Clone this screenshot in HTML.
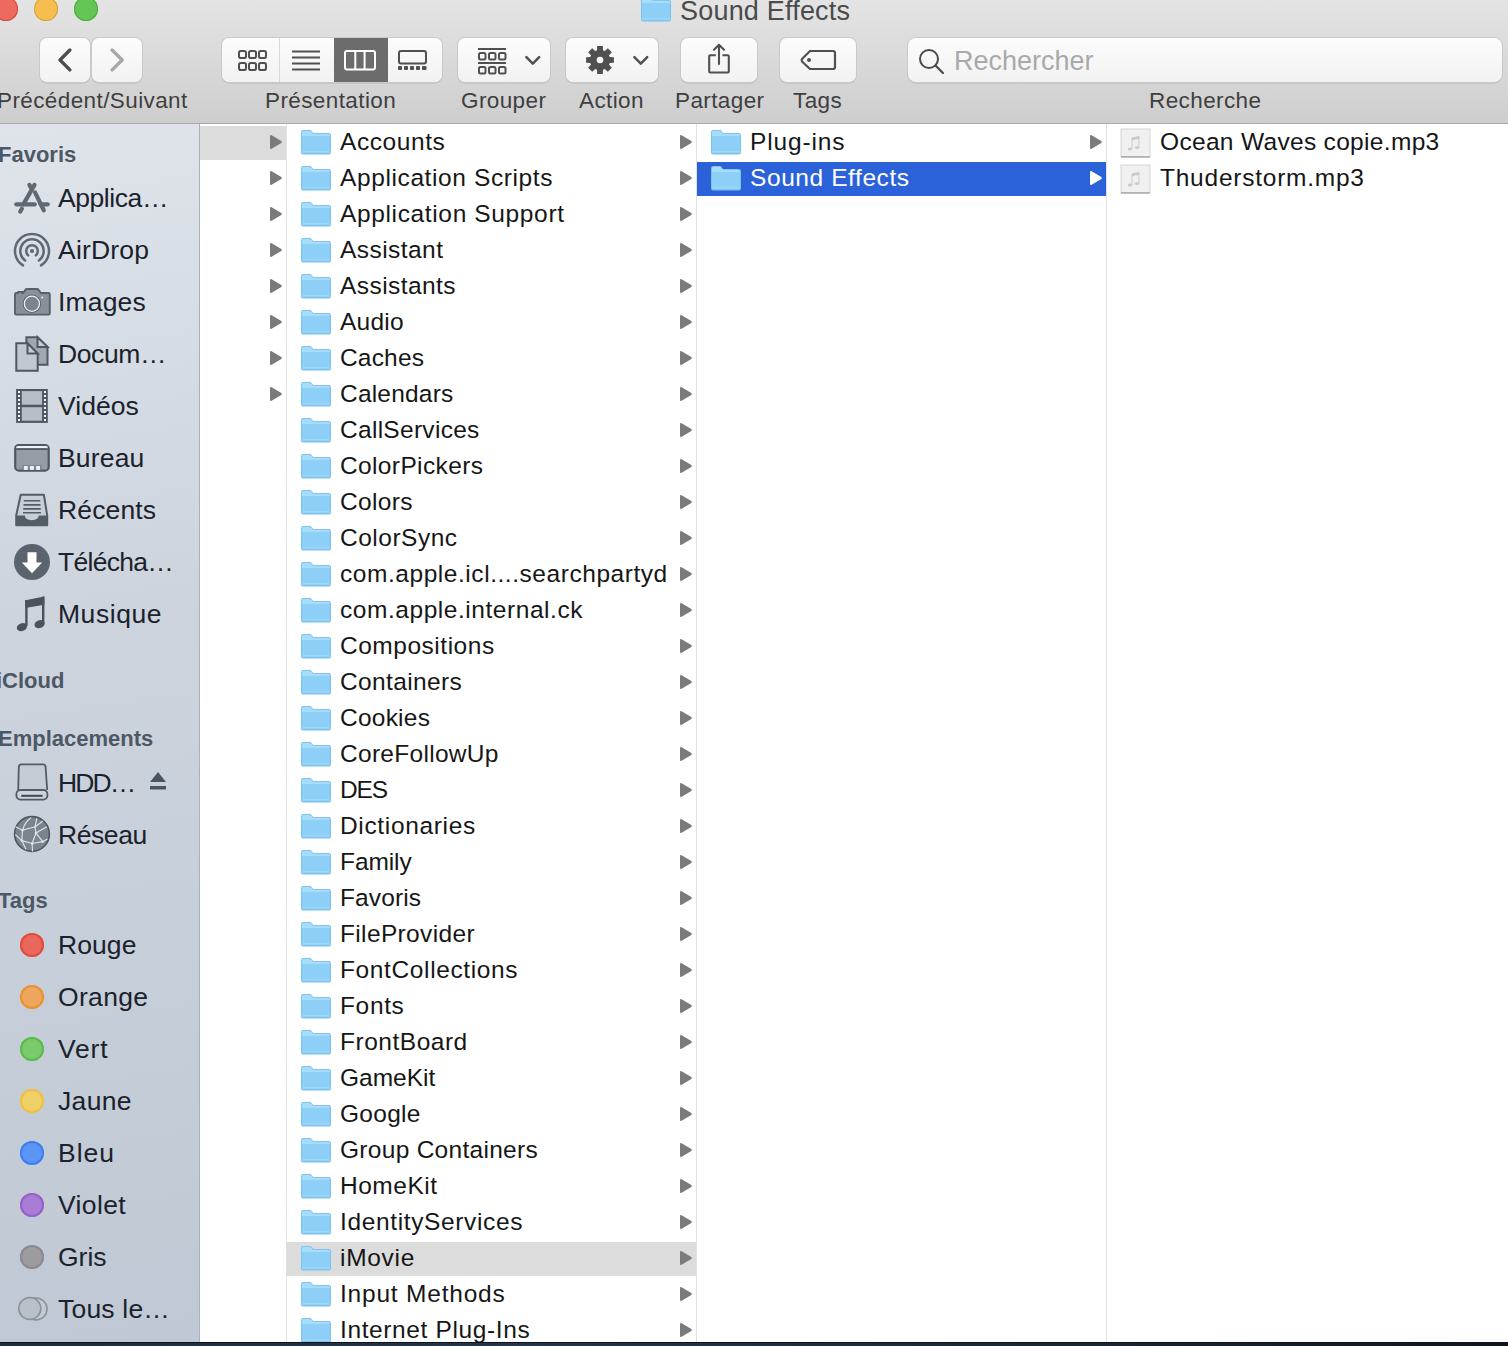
<!DOCTYPE html>
<html><head><meta charset="utf-8"><style>
*{margin:0;padding:0;box-sizing:border-box}
html,body{width:1508px;height:1346px;overflow:hidden;background:#fff;font-family:"Liberation Sans",sans-serif}
.t{position:absolute;font-size:24.5px;line-height:34px;white-space:nowrap}
.fd{display:block}
.ar{display:block}
.tb{position:absolute;top:38px;height:44px;border-radius:7px;background:linear-gradient(#fcfcfc,#f2f2f2);box-shadow:0 0 0 1px #c9c9c9, 0 1px 0 0.5px #b5b5b5}
.lbl{position:absolute;top:87px;font-size:22.5px;line-height:28px;color:#3f3f3f;white-space:nowrap;letter-spacing:0.4px}
.sb{position:absolute;left:58px;font-size:26.5px;line-height:34px;color:#1b222c;white-space:nowrap;letter-spacing:0.2px}
.sh{position:absolute;left:-1px;font-size:22px;line-height:28px;font-weight:bold;color:#4d5865;white-space:nowrap;letter-spacing:0}
.ic{position:absolute;left:10px;width:44px;height:44px}
</style></head><body>


<div style="position:absolute;left:0;top:0;width:1508px;height:124px;background:linear-gradient(#e4e4e4,#cecece);border-bottom:1px solid #a9a9a9"></div>
<div style="position:absolute;left:-6px;top:-3px;width:24px;height:24px;border-radius:50%;background:#ed6a5e;box-shadow:inset 0 0 0 1px #d5493c"></div>
<div style="position:absolute;left:34px;top:-3px;width:24px;height:24px;border-radius:50%;background:#f5be4f;box-shadow:inset 0 0 0 1px #d9a13a"></div>
<div style="position:absolute;left:74px;top:-3px;width:24px;height:24px;border-radius:50%;background:#62c554;box-shadow:inset 0 0 0 1px #4ea73f"></div>
<div style="position:absolute;left:641px;top:-3px;width:30px;height:25px"><svg width="30" height="25" viewBox="0 0 30 25"><path d="M0 2.2 Q0 0 2.2 0 H9.6 L12.2 3 H27.8 Q30 3 30 5.2 V22.2 Q30 24.4 27.8 24.4 H2.2 Q0 24.4 0 22.2 Z" fill="#76bdea"/><path d="M0.8 2.4 Q0.8 0.8 2.4 0.8 H9.3 L11.9 3.8 H27.6 Q29.2 3.8 29.2 5.4 V6 H0.8 Z" fill="#a7dcfa"/><rect x="0.8" y="6" width="28.4" height="17.4" fill="#8dcff6"/><rect x="0.8" y="21.2" width="28.4" height="1.2" fill="#a0d8f8"/></svg></div>
<div style="position:absolute;left:680px;top:-5px;font-size:27px;line-height:32px;color:#4b4b4b;white-space:nowrap;letter-spacing:0.2px">Sound Effects</div>
<div class="tb" style="left:40px;width:50px"></div><div class="tb" style="left:92px;width:50px"></div>
<svg style="position:absolute;left:40px;top:38px" width="102" height="44"><path d="M29.9 12 L20 22 L29.9 31.9" fill="none" stroke="#4d4d4d" stroke-width="3.4" stroke-linecap="round" stroke-linejoin="round"/><path d="M72.1 12 L82.2 22 L72.1 31.9" fill="none" stroke="#a8a8a8" stroke-width="3.4" stroke-linecap="round" stroke-linejoin="round"/></svg>
<div class="lbl" style="left:-3px">Précédent/Suivant</div>
<div class="tb" style="left:222px;width:220px;overflow:hidden"><div style="position:absolute;left:112px;top:0;width:54px;height:44px;background:#6c6c6c"></div><div style="position:absolute;left:57px;top:0;width:1px;height:44px;background:#d9d9d9"></div></div>
<svg style="position:absolute;left:222px;top:38px" width="220" height="44">
<g fill="none" stroke="#505050" stroke-width="2">
<rect x="17" y="13" width="7" height="7" rx="1.8"/><rect x="27" y="13" width="7" height="7" rx="1.8"/><rect x="37" y="13" width="7" height="7" rx="1.8"/>
<rect x="17" y="25" width="7" height="7" rx="1.8"/><rect x="27" y="25" width="7" height="7" rx="1.8"/><rect x="37" y="25" width="7" height="7" rx="1.8"/>
<path d="M70 13.5H98M70 19.5H98M70 25.5H98M70 31.5H98"/>
<rect x="177" y="13" width="27" height="12.5" rx="2"/>
</g>
<g fill="#505050"><rect x="176" y="28" width="4" height="4" rx="0.8"/><rect x="182" y="28" width="4" height="4" rx="0.8"/><rect x="188" y="28" width="4" height="4" rx="0.8"/><rect x="194" y="28" width="4" height="4" rx="0.8"/><rect x="200" y="28" width="4.5" height="4" rx="0.8"/></g>
<g fill="none" stroke="#fff" stroke-width="2"><rect x="123" y="13" width="30" height="18.5" rx="2"/><path d="M133.3 13V31.5M142.6 13V31.5"/></g>
</svg>
<div class="lbl" style="left:265px">Présentation</div>
<div class="tb" style="left:458px;width:92px"></div>
<svg style="position:absolute;left:458px;top:38px" width="92" height="44">
<g fill="none" stroke="#505050" stroke-width="2"><path d="M20 11H48M20 25H48"/>
<rect x="21" y="15" width="6.5" height="6.5" rx="1.5"/><rect x="31" y="15" width="6.5" height="6.5" rx="1.5"/><rect x="41" y="15" width="6.5" height="6.5" rx="1.5"/>
<rect x="21" y="29" width="6.5" height="6.5" rx="1.5"/><rect x="31" y="29" width="6.5" height="6.5" rx="1.5"/><rect x="41" y="29" width="6.5" height="6.5" rx="1.5"/>
<path d="M68.4 19.2L74.8 25.6L81.2 19.2" stroke-width="2.5" stroke-linecap="round" stroke-linejoin="round"/></g></svg>
<div class="lbl" style="left:461px">Grouper</div>
<div class="tb" style="left:566px;width:92px"></div>
<svg style="position:absolute;left:566px;top:38px" width="92" height="44">
<path d="M43.74 18.99 L47.92 19.18 L47.92 24.82 L43.74 25.01 L43.02 26.76 L45.84 29.85 L41.85 33.84 L38.76 31.02 L37.01 31.74 L36.82 35.92 L31.18 35.92 L30.99 31.74 L29.24 31.02 L26.15 33.84 L22.16 29.85 L24.98 26.76 L24.26 25.01 L20.08 24.82 L20.08 19.18 L24.26 18.99 L24.98 17.24 L22.16 14.15 L26.15 10.16 L29.24 12.98 L30.99 12.26 L31.18 8.08 L36.82 8.08 L37.01 12.26 L38.76 12.98 L41.85 10.16 L45.84 14.15 L43.02 17.24Z M37.3 22 A3.3 3.3 0 1 0 30.7 22 A3.3 3.3 0 1 0 37.3 22Z" fill="#505050" fill-rule="evenodd"/>
<path d="M68.4 19.2L74.8 25.6L81.2 19.2" fill="none" stroke="#505050" stroke-width="2.5" stroke-linecap="round" stroke-linejoin="round"/></svg>
<div class="lbl" style="left:579px">Action</div>
<div class="tb" style="left:681px;width:76px"></div>
<svg style="position:absolute;left:681px;top:38px" width="76" height="44">
<g fill="none" stroke="#505050" stroke-width="2.1" stroke-linejoin="round"><path d="M34.8 17.2H29.2Q28.2 17.2 28.2 18.2V33.5Q28.2 34.5 29.2 34.5H46.8Q47.8 34.5 47.8 33.5V18.2Q47.8 17.2 46.8 17.2H41.4"/><path d="M38 26V7.2M33 11.8L38 6.8L43 11.8" stroke-linecap="round"/></g></svg>
<div class="lbl" style="left:675px">Partager</div>
<div class="tb" style="left:780px;width:76px"></div>
<svg style="position:absolute;left:780px;top:38px" width="76" height="44">
<path d="M30 13H53Q55 13 55 15V29Q55 31 53 31H30L22 23.5Q21.3 22 22 21Z" fill="none" stroke="#505050" stroke-width="2.2" stroke-linejoin="round"/><circle cx="29" cy="22" r="2" fill="#505050"/></svg>
<div class="lbl" style="left:793px">Tags</div>
<div class="tb" style="left:908px;width:594px;border-radius:8px"></div>
<svg style="position:absolute;left:908px;top:38px" width="60" height="44"><circle cx="21" cy="21" r="9" fill="none" stroke="#4a4a4a" stroke-width="2"/><path d="M27.5 27.5L35 35" stroke="#4a4a4a" stroke-width="2.2" stroke-linecap="round"/></svg>
<div style="position:absolute;left:954px;top:45px;font-size:27px;line-height:32px;color:#a9a9a9;white-space:nowrap">Rechercher</div>
<div class="lbl" style="left:1149px">Recherche</div>
<div style="position:absolute;left:0;top:124px;width:200px;height:1222px;background:linear-gradient(172deg,#dfe4ea 0%,#cdd4de 40%,#bfc8d4 100%);border-right:1px solid #a9b1bc"></div>
<div class="sh" style="top:141px;left:-2px">Favoris</div>
<svg class="ic" style="top:176px" width="44" height="44" viewBox="0 0 44 44"><g stroke="#606872" stroke-width="4.2" stroke-linecap="round" fill="none"><path d="M24.5 8.9L13.4 28.3"/><path d="M11.9 32.7L10.2 35.6"/><path d="M19.4 8.9L21.6 12.7"/><path d="M25 16.4L33.8 34.3"/><path d="M6.3 28.3H24.8"/><path d="M30.6 28.3H37.7"/></g></svg>
<div class="sb" style="top:181px;letter-spacing:-0.43px">Applica…</div>
<svg class="ic" style="top:228px" width="44" height="44" viewBox="0 0 44 44"><g stroke="#606872" stroke-width="2.5" fill="none" stroke-linecap="round"><path d="M18.12 27.31A5.8 5.8 0 1 1 25.88 27.31"/><path d="M15.12 32.47A11.7 11.7 0 1 1 28.88 32.47"/><path d="M12.99 37.42A17 17 0 1 1 31.01 37.42"/></g><circle cx="22" cy="23" r="2.1" fill="#606872"/></svg>
<div class="sb" style="top:233px;letter-spacing:0.2px">AirDrop</div>
<svg class="ic" style="top:280px" width="44" height="44" viewBox="0 0 44 44"><path d="M5 14.2Q5 13 6.2 13H8V11.9H12.3V13H13.2L15.4 9.9Q15.9 9 17 9H27Q28 9 28.6 9.9L30.8 13H38.6Q39.8 13 39.8 14.2V33.4Q39.8 34.6 38.6 34.6H6.2Q5 34.6 5 33.4Z" fill="#8a9099" stroke="#575f69" stroke-width="1.9" stroke-linejoin="round"/><circle cx="21.9" cy="23.8" r="9.2" fill="#5d656f"/><circle cx="21.9" cy="23.8" r="7.6" fill="#7d848d" stroke="#eef0f3" stroke-width="1.2"/><circle cx="32.3" cy="17.5" r="0.9" fill="#eef0f3"/></svg>
<div class="sb" style="top:285px;letter-spacing:0.16px">Images</div>
<svg class="ic" style="top:332px" width="44" height="44" viewBox="0 0 44 44"><path d="M16.4 5.2H27.5L37.5 14.9V32.8H16.4Z" fill="#a0a7b0" stroke="#4f5761" stroke-width="2" stroke-linejoin="miter"/><path d="M27.5 5.2V14.9H37.5Z" fill="#c5cbd2" stroke="#4f5761" stroke-width="2"/><path d="M6.3 11.2H17.5L27.7 21.6V38.7H6.3Z" fill="#c2c8d0" stroke="#4f5761" stroke-width="2"/><path d="M17.5 11.2V21.6H27.7Z" fill="#c9ced5" stroke="#4f5761" stroke-width="2"/></svg>
<div class="sb" style="top:337px;letter-spacing:-0.4px">Docum…</div>
<svg class="ic" style="top:384px" width="44" height="44" viewBox="0 0 44 44"><rect x="6.1" y="5" width="31.7" height="33.9" fill="#4f5761"/><rect x="11.8" y="7.1" width="20.3" height="13.6" fill="#b7bec7"/><rect x="11.8" y="23.2" width="20.3" height="13.5" fill="#b7bec7"/><g fill="#f2f4f6"><rect x="8" y="7" width="2" height="2"/><rect x="8" y="11" width="2" height="2"/><rect x="8" y="15" width="2" height="2"/><rect x="8" y="19" width="2" height="2"/><rect x="8" y="23" width="2" height="2"/><rect x="8" y="27" width="2" height="2"/><rect x="8" y="31" width="2" height="2"/><rect x="8" y="35" width="2" height="2"/><rect x="34" y="7" width="2" height="2"/><rect x="34" y="11" width="2" height="2"/><rect x="34" y="15" width="2" height="2"/><rect x="34" y="19" width="2" height="2"/><rect x="34" y="23" width="2" height="2"/><rect x="34" y="27" width="2" height="2"/><rect x="34" y="31" width="2" height="2"/><rect x="34" y="35" width="2" height="2"/></g></svg>
<div class="sb" style="top:389px;letter-spacing:0.04px">Vidéos</div>
<svg class="ic" style="top:436px" width="44" height="44" viewBox="0 0 44 44"><rect x="5.2" y="9" width="33.5" height="25.7" rx="3.8" fill="#959ca5" stroke="#4f5761" stroke-width="2.2"/><path d="M6.3 10.5Q7 10.1 9 10.1H35Q37 10.1 37.6 10.5V12.2H6.3Z" fill="#eef0f3"/><rect x="6.3" y="12.2" width="31.3" height="1.8" fill="#4f5761"/><rect x="12.1" y="28.9" width="19.6" height="5" fill="#80878f"/><g fill="#eef0f3"><rect x="13.9" y="30" width="3.9" height="3.9"/><rect x="20" y="30" width="3.9" height="3.9"/><rect x="26.1" y="30" width="3.9" height="3.9"/></g></svg>
<div class="sb" style="top:441px;letter-spacing:0.18px">Bureau</div>
<svg class="ic" style="top:488px" width="44" height="44" viewBox="0 0 44 44"><path d="M10.7 6.8H33.9L37.2 27.5V37.2H6.2V27.5Z" fill="#c8ced5" stroke="#545c67" stroke-width="2" stroke-linejoin="round"/><g stroke="#545c67" stroke-width="1.6"><path d="M13.8 12.8H30.2M13.5 16.9H30.5M13.3 20.9H30.7M13 24.8H31"/></g><path d="M6.2 27.6H14.7Q15.5 32.2 21.8 32.2Q28 32.2 28.8 27.6H37.2V36.2Q37.2 37.2 36.2 37.2H7.2Q6.2 37.2 6.2 36.2Z" fill="#545c67"/></svg>
<div class="sb" style="top:493px;letter-spacing:0.15px">Récents</div>
<svg class="ic" style="top:540px" width="44" height="44" viewBox="0 0 44 44"><circle cx="22" cy="22" r="18" fill="#5b636e"/><path d="M17.5 12.3H26.5V22.5H32.2L22 33.2L11.8 22.5H17.5Z" fill="#fff"/></svg>
<div class="sb" style="top:545px;letter-spacing:-0.71px">Télécha…</div>
<svg class="ic" style="top:592px" width="44" height="44" viewBox="0 0 44 44"><path d="M15.2 8.2L34.4 4.4V12.8L15.2 16Z" fill="#4a525d"/><rect x="15.2" y="8" width="2.4" height="26" fill="#4a525d"/><rect x="32" y="4.6" width="2.4" height="27" fill="#4a525d"/><ellipse cx="11.9" cy="35.2" rx="5.2" ry="3.9" transform="rotate(-20 11.9 35.2)" fill="#4a525d"/><ellipse cx="29.6" cy="32.2" rx="5.2" ry="3.9" transform="rotate(-20 29.6 32.2)" fill="#4a525d"/></svg>
<div class="sb" style="top:597px;letter-spacing:0.55px">Musique</div>
<div class="sh" style="top:667px;left:-4px">iCloud</div>
<div class="sh" style="top:725px;left:-2px">Emplacements</div>
<svg class="ic" style="top:761px" width="44" height="44" viewBox="0 0 44 44"><path d="M8.2 29L8.8 6Q8.9 3.3 11.4 3.3H33Q35.5 3.3 35.6 6L37.2 29" fill="#c5ccd5" stroke="#535b66" stroke-width="1.8" stroke-linejoin="round"/><rect x="6.4" y="29" width="31" height="9.6" rx="4" fill="#cdd3db" stroke="#535b66" stroke-width="1.8"/><path d="M11.2 34.8H32.6" stroke="#3f4650" stroke-width="2"/></svg>
<div class="sb" style="top:766px;letter-spacing:-1.87px">HDD…</div>
<svg class="ic" style="top:813px" width="44" height="44" viewBox="0 0 44 44"><circle cx="22" cy="21" r="17.4" fill="#7b838e" stroke="#4f5761" stroke-width="1.6"/><g stroke="#dde2e8" stroke-width="1.2" fill="none" stroke-linecap="round"><path d="M12.5 17.3Q15 9 20.7 5.1M12.5 17.3L6 14M12.5 17.3Q18 15.5 25 14M25 14L26.7 5.8M25 14L32.5 8.3M26 20.1L36.4 14M26 20.1L25 14M26 20.1L22.1 30.5M26 20.1L32.8 28.7M12.5 17.3L11.8 27.6M11.8 27.6L5.7 21.9M11.8 27.6L22.1 30.5M11.8 27.6L15.7 35.8M22.1 30.5L22.5 38M22.1 30.5L32.8 28.7M32.8 28.7L37 26.2"/></g><g fill="#dde2e8"><circle cx="12.5" cy="17.3" r="1.3"/><circle cx="25" cy="14" r="1.1"/><circle cx="26" cy="20.1" r="1.3"/><circle cx="11.8" cy="27.6" r="1.3"/><circle cx="22.1" cy="30.5" r="1.3"/><circle cx="32.8" cy="28.7" r="1.3"/></g></svg>
<div class="sb" style="top:818px;letter-spacing:-0.42px">Réseau</div>
<div class="sh" style="top:887px;left:-2px">Tags</div>
<svg style="position:absolute;left:148px;top:770px" width="20" height="22"><path d="M10 2L18 12H2Z" fill="#4b5562"/><rect x="2" y="16" width="16" height="3.5" fill="#4b5562"/></svg>
<div style="position:absolute;left:20px;top:933px;width:24px;height:24px;border-radius:50%;background:#e8695c;box-shadow:inset 0 0 0 2px #e34b3d"></div>
<div class="sb" style="top:928px;letter-spacing:0.07px">Rouge</div>
<div style="position:absolute;left:20px;top:985px;width:24px;height:24px;border-radius:50%;background:#eca65d;box-shadow:inset 0 0 0 2px #ea922f"></div>
<div class="sb" style="top:980px;letter-spacing:0.34px">Orange</div>
<div style="position:absolute;left:20px;top:1037px;width:24px;height:24px;border-radius:50%;background:#7bcb6c;box-shadow:inset 0 0 0 2px #58bb4a"></div>
<div class="sb" style="top:1032px;letter-spacing:0.83px">Vert</div>
<div style="position:absolute;left:20px;top:1089px;width:24px;height:24px;border-radius:50%;background:#f2d069;box-shadow:inset 0 0 0 2px #efc03e"></div>
<div class="sb" style="top:1084px;letter-spacing:0.35px">Jaune</div>
<div style="position:absolute;left:20px;top:1141px;width:24px;height:24px;border-radius:50%;background:#5b95f5;box-shadow:inset 0 0 0 2px #3e7ef1"></div>
<div class="sb" style="top:1136px;letter-spacing:1.0px">Bleu</div>
<div style="position:absolute;left:20px;top:1193px;width:24px;height:24px;border-radius:50%;background:#a97dd6;box-shadow:inset 0 0 0 2px #9461cb"></div>
<div class="sb" style="top:1188px;letter-spacing:0.38px">Violet</div>
<div style="position:absolute;left:20px;top:1245px;width:24px;height:24px;border-radius:50%;background:#9c9ca0;box-shadow:inset 0 0 0 2px #8b8b8f"></div>
<div class="sb" style="top:1240px;letter-spacing:0.0px">Gris</div>
<svg style="position:absolute;left:16px;top:1295px" width="34" height="28"><circle cx="20" cy="14" r="11" fill="#c3cad3" stroke="#8a9199" stroke-width="1.6"/><circle cx="13.8" cy="13.5" r="11" fill="#b9c0c9" stroke="#8a9199" stroke-width="1.6"/></svg>
<div class="sb" style="top:1292px">Tous le…</div>
<div style="position:absolute;left:286px;top:124px;width:1px;height:1222px;background:#e2e2e2"></div>
<div style="position:absolute;left:696px;top:124px;width:1px;height:1222px;background:#e2e2e2"></div>
<div style="position:absolute;left:1106px;top:124px;width:1px;height:1222px;background:#e2e2e2"></div>
<div style="position:absolute;left:200px;top:126px;width:86px;height:34px;background:#dcdcdc"></div><div style="position:absolute;left:270px;top:135px;width:12px;height:14px"><svg class="ar" width="12" height="14" viewBox="0 0 12 14"><path d="M1.6 0.3 L11.3 6 Q12.3 7 11.3 8 L1.6 13.7 Q0 14.5 0 12.7 V1.3 Q0 -0.5 1.6 0.3Z" fill="#7b7b7b"/></svg></div>
<div style="position:absolute;left:270px;top:171px;width:12px;height:14px"><svg class="ar" width="12" height="14" viewBox="0 0 12 14"><path d="M1.6 0.3 L11.3 6 Q12.3 7 11.3 8 L1.6 13.7 Q0 14.5 0 12.7 V1.3 Q0 -0.5 1.6 0.3Z" fill="#7b7b7b"/></svg></div>
<div style="position:absolute;left:270px;top:207px;width:12px;height:14px"><svg class="ar" width="12" height="14" viewBox="0 0 12 14"><path d="M1.6 0.3 L11.3 6 Q12.3 7 11.3 8 L1.6 13.7 Q0 14.5 0 12.7 V1.3 Q0 -0.5 1.6 0.3Z" fill="#7b7b7b"/></svg></div>
<div style="position:absolute;left:270px;top:243px;width:12px;height:14px"><svg class="ar" width="12" height="14" viewBox="0 0 12 14"><path d="M1.6 0.3 L11.3 6 Q12.3 7 11.3 8 L1.6 13.7 Q0 14.5 0 12.7 V1.3 Q0 -0.5 1.6 0.3Z" fill="#7b7b7b"/></svg></div>
<div style="position:absolute;left:270px;top:279px;width:12px;height:14px"><svg class="ar" width="12" height="14" viewBox="0 0 12 14"><path d="M1.6 0.3 L11.3 6 Q12.3 7 11.3 8 L1.6 13.7 Q0 14.5 0 12.7 V1.3 Q0 -0.5 1.6 0.3Z" fill="#7b7b7b"/></svg></div>
<div style="position:absolute;left:270px;top:315px;width:12px;height:14px"><svg class="ar" width="12" height="14" viewBox="0 0 12 14"><path d="M1.6 0.3 L11.3 6 Q12.3 7 11.3 8 L1.6 13.7 Q0 14.5 0 12.7 V1.3 Q0 -0.5 1.6 0.3Z" fill="#7b7b7b"/></svg></div>
<div style="position:absolute;left:270px;top:351px;width:12px;height:14px"><svg class="ar" width="12" height="14" viewBox="0 0 12 14"><path d="M1.6 0.3 L11.3 6 Q12.3 7 11.3 8 L1.6 13.7 Q0 14.5 0 12.7 V1.3 Q0 -0.5 1.6 0.3Z" fill="#7b7b7b"/></svg></div>
<div style="position:absolute;left:270px;top:387px;width:12px;height:14px"><svg class="ar" width="12" height="14" viewBox="0 0 12 14"><path d="M1.6 0.3 L11.3 6 Q12.3 7 11.3 8 L1.6 13.7 Q0 14.5 0 12.7 V1.3 Q0 -0.5 1.6 0.3Z" fill="#7b7b7b"/></svg></div>
<div style="position:absolute;left:301px;top:130px;width:30px;height:25px"><svg class="fd" width="30" height="25" viewBox="0 0 30 25"><path d="M0 2.2 Q0 0 2.2 0 H9.6 L12.2 3 H27.8 Q30 3 30 5.2 V22.2 Q30 24.4 27.8 24.4 H2.2 Q0 24.4 0 22.2 Z" fill="#76bdea"/><path d="M0.8 2.4 Q0.8 0.8 2.4 0.8 H9.3 L11.9 3.8 H27.6 Q29.2 3.8 29.2 5.4 V6 H0.8 Z" fill="#a7dcfa"/><rect x="0.8" y="6" width="28.4" height="17.4" fill="#8dcff6"/><rect x="0.8" y="21.2" width="28.4" height="1.2" fill="#a0d8f8"/></svg></div><div class="t" style="left:340px;top:125px;color:#161616;letter-spacing:0.57px">Accounts</div><div style="position:absolute;left:680px;top:135px;width:12px;height:14px"><svg class="ar" width="12" height="14" viewBox="0 0 12 14"><path d="M1.6 0.3 L11.3 6 Q12.3 7 11.3 8 L1.6 13.7 Q0 14.5 0 12.7 V1.3 Q0 -0.5 1.6 0.3Z" fill="#7b7b7b"/></svg></div>
<div style="position:absolute;left:301px;top:166px;width:30px;height:25px"><svg class="fd" width="30" height="25" viewBox="0 0 30 25"><path d="M0 2.2 Q0 0 2.2 0 H9.6 L12.2 3 H27.8 Q30 3 30 5.2 V22.2 Q30 24.4 27.8 24.4 H2.2 Q0 24.4 0 22.2 Z" fill="#76bdea"/><path d="M0.8 2.4 Q0.8 0.8 2.4 0.8 H9.3 L11.9 3.8 H27.6 Q29.2 3.8 29.2 5.4 V6 H0.8 Z" fill="#a7dcfa"/><rect x="0.8" y="6" width="28.4" height="17.4" fill="#8dcff6"/><rect x="0.8" y="21.2" width="28.4" height="1.2" fill="#a0d8f8"/></svg></div><div class="t" style="left:340px;top:161px;color:#161616;letter-spacing:0.61px">Application Scripts</div><div style="position:absolute;left:680px;top:171px;width:12px;height:14px"><svg class="ar" width="12" height="14" viewBox="0 0 12 14"><path d="M1.6 0.3 L11.3 6 Q12.3 7 11.3 8 L1.6 13.7 Q0 14.5 0 12.7 V1.3 Q0 -0.5 1.6 0.3Z" fill="#7b7b7b"/></svg></div>
<div style="position:absolute;left:301px;top:202px;width:30px;height:25px"><svg class="fd" width="30" height="25" viewBox="0 0 30 25"><path d="M0 2.2 Q0 0 2.2 0 H9.6 L12.2 3 H27.8 Q30 3 30 5.2 V22.2 Q30 24.4 27.8 24.4 H2.2 Q0 24.4 0 22.2 Z" fill="#76bdea"/><path d="M0.8 2.4 Q0.8 0.8 2.4 0.8 H9.3 L11.9 3.8 H27.6 Q29.2 3.8 29.2 5.4 V6 H0.8 Z" fill="#a7dcfa"/><rect x="0.8" y="6" width="28.4" height="17.4" fill="#8dcff6"/><rect x="0.8" y="21.2" width="28.4" height="1.2" fill="#a0d8f8"/></svg></div><div class="t" style="left:340px;top:197px;color:#161616;letter-spacing:0.64px">Application Support</div><div style="position:absolute;left:680px;top:207px;width:12px;height:14px"><svg class="ar" width="12" height="14" viewBox="0 0 12 14"><path d="M1.6 0.3 L11.3 6 Q12.3 7 11.3 8 L1.6 13.7 Q0 14.5 0 12.7 V1.3 Q0 -0.5 1.6 0.3Z" fill="#7b7b7b"/></svg></div>
<div style="position:absolute;left:301px;top:238px;width:30px;height:25px"><svg class="fd" width="30" height="25" viewBox="0 0 30 25"><path d="M0 2.2 Q0 0 2.2 0 H9.6 L12.2 3 H27.8 Q30 3 30 5.2 V22.2 Q30 24.4 27.8 24.4 H2.2 Q0 24.4 0 22.2 Z" fill="#76bdea"/><path d="M0.8 2.4 Q0.8 0.8 2.4 0.8 H9.3 L11.9 3.8 H27.6 Q29.2 3.8 29.2 5.4 V6 H0.8 Z" fill="#a7dcfa"/><rect x="0.8" y="6" width="28.4" height="17.4" fill="#8dcff6"/><rect x="0.8" y="21.2" width="28.4" height="1.2" fill="#a0d8f8"/></svg></div><div class="t" style="left:340px;top:233px;color:#161616;letter-spacing:0.45px">Assistant</div><div style="position:absolute;left:680px;top:243px;width:12px;height:14px"><svg class="ar" width="12" height="14" viewBox="0 0 12 14"><path d="M1.6 0.3 L11.3 6 Q12.3 7 11.3 8 L1.6 13.7 Q0 14.5 0 12.7 V1.3 Q0 -0.5 1.6 0.3Z" fill="#7b7b7b"/></svg></div>
<div style="position:absolute;left:301px;top:274px;width:30px;height:25px"><svg class="fd" width="30" height="25" viewBox="0 0 30 25"><path d="M0 2.2 Q0 0 2.2 0 H9.6 L12.2 3 H27.8 Q30 3 30 5.2 V22.2 Q30 24.4 27.8 24.4 H2.2 Q0 24.4 0 22.2 Z" fill="#76bdea"/><path d="M0.8 2.4 Q0.8 0.8 2.4 0.8 H9.3 L11.9 3.8 H27.6 Q29.2 3.8 29.2 5.4 V6 H0.8 Z" fill="#a7dcfa"/><rect x="0.8" y="6" width="28.4" height="17.4" fill="#8dcff6"/><rect x="0.8" y="21.2" width="28.4" height="1.2" fill="#a0d8f8"/></svg></div><div class="t" style="left:340px;top:269px;color:#161616;letter-spacing:0.43px">Assistants</div><div style="position:absolute;left:680px;top:279px;width:12px;height:14px"><svg class="ar" width="12" height="14" viewBox="0 0 12 14"><path d="M1.6 0.3 L11.3 6 Q12.3 7 11.3 8 L1.6 13.7 Q0 14.5 0 12.7 V1.3 Q0 -0.5 1.6 0.3Z" fill="#7b7b7b"/></svg></div>
<div style="position:absolute;left:301px;top:310px;width:30px;height:25px"><svg class="fd" width="30" height="25" viewBox="0 0 30 25"><path d="M0 2.2 Q0 0 2.2 0 H9.6 L12.2 3 H27.8 Q30 3 30 5.2 V22.2 Q30 24.4 27.8 24.4 H2.2 Q0 24.4 0 22.2 Z" fill="#76bdea"/><path d="M0.8 2.4 Q0.8 0.8 2.4 0.8 H9.3 L11.9 3.8 H27.6 Q29.2 3.8 29.2 5.4 V6 H0.8 Z" fill="#a7dcfa"/><rect x="0.8" y="6" width="28.4" height="17.4" fill="#8dcff6"/><rect x="0.8" y="21.2" width="28.4" height="1.2" fill="#a0d8f8"/></svg></div><div class="t" style="left:340px;top:305px;color:#161616;letter-spacing:0.22px">Audio</div><div style="position:absolute;left:680px;top:315px;width:12px;height:14px"><svg class="ar" width="12" height="14" viewBox="0 0 12 14"><path d="M1.6 0.3 L11.3 6 Q12.3 7 11.3 8 L1.6 13.7 Q0 14.5 0 12.7 V1.3 Q0 -0.5 1.6 0.3Z" fill="#7b7b7b"/></svg></div>
<div style="position:absolute;left:301px;top:346px;width:30px;height:25px"><svg class="fd" width="30" height="25" viewBox="0 0 30 25"><path d="M0 2.2 Q0 0 2.2 0 H9.6 L12.2 3 H27.8 Q30 3 30 5.2 V22.2 Q30 24.4 27.8 24.4 H2.2 Q0 24.4 0 22.2 Z" fill="#76bdea"/><path d="M0.8 2.4 Q0.8 0.8 2.4 0.8 H9.3 L11.9 3.8 H27.6 Q29.2 3.8 29.2 5.4 V6 H0.8 Z" fill="#a7dcfa"/><rect x="0.8" y="6" width="28.4" height="17.4" fill="#8dcff6"/><rect x="0.8" y="21.2" width="28.4" height="1.2" fill="#a0d8f8"/></svg></div><div class="t" style="left:340px;top:341px;color:#161616;letter-spacing:0.18px">Caches</div><div style="position:absolute;left:680px;top:351px;width:12px;height:14px"><svg class="ar" width="12" height="14" viewBox="0 0 12 14"><path d="M1.6 0.3 L11.3 6 Q12.3 7 11.3 8 L1.6 13.7 Q0 14.5 0 12.7 V1.3 Q0 -0.5 1.6 0.3Z" fill="#7b7b7b"/></svg></div>
<div style="position:absolute;left:301px;top:382px;width:30px;height:25px"><svg class="fd" width="30" height="25" viewBox="0 0 30 25"><path d="M0 2.2 Q0 0 2.2 0 H9.6 L12.2 3 H27.8 Q30 3 30 5.2 V22.2 Q30 24.4 27.8 24.4 H2.2 Q0 24.4 0 22.2 Z" fill="#76bdea"/><path d="M0.8 2.4 Q0.8 0.8 2.4 0.8 H9.3 L11.9 3.8 H27.6 Q29.2 3.8 29.2 5.4 V6 H0.8 Z" fill="#a7dcfa"/><rect x="0.8" y="6" width="28.4" height="17.4" fill="#8dcff6"/><rect x="0.8" y="21.2" width="28.4" height="1.2" fill="#a0d8f8"/></svg></div><div class="t" style="left:340px;top:377px;color:#161616;letter-spacing:0.2px">Calendars</div><div style="position:absolute;left:680px;top:387px;width:12px;height:14px"><svg class="ar" width="12" height="14" viewBox="0 0 12 14"><path d="M1.6 0.3 L11.3 6 Q12.3 7 11.3 8 L1.6 13.7 Q0 14.5 0 12.7 V1.3 Q0 -0.5 1.6 0.3Z" fill="#7b7b7b"/></svg></div>
<div style="position:absolute;left:301px;top:418px;width:30px;height:25px"><svg class="fd" width="30" height="25" viewBox="0 0 30 25"><path d="M0 2.2 Q0 0 2.2 0 H9.6 L12.2 3 H27.8 Q30 3 30 5.2 V22.2 Q30 24.4 27.8 24.4 H2.2 Q0 24.4 0 22.2 Z" fill="#76bdea"/><path d="M0.8 2.4 Q0.8 0.8 2.4 0.8 H9.3 L11.9 3.8 H27.6 Q29.2 3.8 29.2 5.4 V6 H0.8 Z" fill="#a7dcfa"/><rect x="0.8" y="6" width="28.4" height="17.4" fill="#8dcff6"/><rect x="0.8" y="21.2" width="28.4" height="1.2" fill="#a0d8f8"/></svg></div><div class="t" style="left:340px;top:413px;color:#161616;letter-spacing:0.29px">CallServices</div><div style="position:absolute;left:680px;top:423px;width:12px;height:14px"><svg class="ar" width="12" height="14" viewBox="0 0 12 14"><path d="M1.6 0.3 L11.3 6 Q12.3 7 11.3 8 L1.6 13.7 Q0 14.5 0 12.7 V1.3 Q0 -0.5 1.6 0.3Z" fill="#7b7b7b"/></svg></div>
<div style="position:absolute;left:301px;top:454px;width:30px;height:25px"><svg class="fd" width="30" height="25" viewBox="0 0 30 25"><path d="M0 2.2 Q0 0 2.2 0 H9.6 L12.2 3 H27.8 Q30 3 30 5.2 V22.2 Q30 24.4 27.8 24.4 H2.2 Q0 24.4 0 22.2 Z" fill="#76bdea"/><path d="M0.8 2.4 Q0.8 0.8 2.4 0.8 H9.3 L11.9 3.8 H27.6 Q29.2 3.8 29.2 5.4 V6 H0.8 Z" fill="#a7dcfa"/><rect x="0.8" y="6" width="28.4" height="17.4" fill="#8dcff6"/><rect x="0.8" y="21.2" width="28.4" height="1.2" fill="#a0d8f8"/></svg></div><div class="t" style="left:340px;top:449px;color:#161616;letter-spacing:0.37px">ColorPickers</div><div style="position:absolute;left:680px;top:459px;width:12px;height:14px"><svg class="ar" width="12" height="14" viewBox="0 0 12 14"><path d="M1.6 0.3 L11.3 6 Q12.3 7 11.3 8 L1.6 13.7 Q0 14.5 0 12.7 V1.3 Q0 -0.5 1.6 0.3Z" fill="#7b7b7b"/></svg></div>
<div style="position:absolute;left:301px;top:490px;width:30px;height:25px"><svg class="fd" width="30" height="25" viewBox="0 0 30 25"><path d="M0 2.2 Q0 0 2.2 0 H9.6 L12.2 3 H27.8 Q30 3 30 5.2 V22.2 Q30 24.4 27.8 24.4 H2.2 Q0 24.4 0 22.2 Z" fill="#76bdea"/><path d="M0.8 2.4 Q0.8 0.8 2.4 0.8 H9.3 L11.9 3.8 H27.6 Q29.2 3.8 29.2 5.4 V6 H0.8 Z" fill="#a7dcfa"/><rect x="0.8" y="6" width="28.4" height="17.4" fill="#8dcff6"/><rect x="0.8" y="21.2" width="28.4" height="1.2" fill="#a0d8f8"/></svg></div><div class="t" style="left:340px;top:485px;color:#161616;letter-spacing:0.36px">Colors</div><div style="position:absolute;left:680px;top:495px;width:12px;height:14px"><svg class="ar" width="12" height="14" viewBox="0 0 12 14"><path d="M1.6 0.3 L11.3 6 Q12.3 7 11.3 8 L1.6 13.7 Q0 14.5 0 12.7 V1.3 Q0 -0.5 1.6 0.3Z" fill="#7b7b7b"/></svg></div>
<div style="position:absolute;left:301px;top:526px;width:30px;height:25px"><svg class="fd" width="30" height="25" viewBox="0 0 30 25"><path d="M0 2.2 Q0 0 2.2 0 H9.6 L12.2 3 H27.8 Q30 3 30 5.2 V22.2 Q30 24.4 27.8 24.4 H2.2 Q0 24.4 0 22.2 Z" fill="#76bdea"/><path d="M0.8 2.4 Q0.8 0.8 2.4 0.8 H9.3 L11.9 3.8 H27.6 Q29.2 3.8 29.2 5.4 V6 H0.8 Z" fill="#a7dcfa"/><rect x="0.8" y="6" width="28.4" height="17.4" fill="#8dcff6"/><rect x="0.8" y="21.2" width="28.4" height="1.2" fill="#a0d8f8"/></svg></div><div class="t" style="left:340px;top:521px;color:#161616;letter-spacing:0.51px">ColorSync</div><div style="position:absolute;left:680px;top:531px;width:12px;height:14px"><svg class="ar" width="12" height="14" viewBox="0 0 12 14"><path d="M1.6 0.3 L11.3 6 Q12.3 7 11.3 8 L1.6 13.7 Q0 14.5 0 12.7 V1.3 Q0 -0.5 1.6 0.3Z" fill="#7b7b7b"/></svg></div>
<div style="position:absolute;left:301px;top:562px;width:30px;height:25px"><svg class="fd" width="30" height="25" viewBox="0 0 30 25"><path d="M0 2.2 Q0 0 2.2 0 H9.6 L12.2 3 H27.8 Q30 3 30 5.2 V22.2 Q30 24.4 27.8 24.4 H2.2 Q0 24.4 0 22.2 Z" fill="#76bdea"/><path d="M0.8 2.4 Q0.8 0.8 2.4 0.8 H9.3 L11.9 3.8 H27.6 Q29.2 3.8 29.2 5.4 V6 H0.8 Z" fill="#a7dcfa"/><rect x="0.8" y="6" width="28.4" height="17.4" fill="#8dcff6"/><rect x="0.8" y="21.2" width="28.4" height="1.2" fill="#a0d8f8"/></svg></div><div class="t" style="left:340px;top:557px;color:#161616;letter-spacing:0.55px">com.apple.icl....searchpartyd</div><div style="position:absolute;left:680px;top:567px;width:12px;height:14px"><svg class="ar" width="12" height="14" viewBox="0 0 12 14"><path d="M1.6 0.3 L11.3 6 Q12.3 7 11.3 8 L1.6 13.7 Q0 14.5 0 12.7 V1.3 Q0 -0.5 1.6 0.3Z" fill="#7b7b7b"/></svg></div>
<div style="position:absolute;left:301px;top:598px;width:30px;height:25px"><svg class="fd" width="30" height="25" viewBox="0 0 30 25"><path d="M0 2.2 Q0 0 2.2 0 H9.6 L12.2 3 H27.8 Q30 3 30 5.2 V22.2 Q30 24.4 27.8 24.4 H2.2 Q0 24.4 0 22.2 Z" fill="#76bdea"/><path d="M0.8 2.4 Q0.8 0.8 2.4 0.8 H9.3 L11.9 3.8 H27.6 Q29.2 3.8 29.2 5.4 V6 H0.8 Z" fill="#a7dcfa"/><rect x="0.8" y="6" width="28.4" height="17.4" fill="#8dcff6"/><rect x="0.8" y="21.2" width="28.4" height="1.2" fill="#a0d8f8"/></svg></div><div class="t" style="left:340px;top:593px;color:#161616;letter-spacing:0.55px">com.apple.internal.ck</div><div style="position:absolute;left:680px;top:603px;width:12px;height:14px"><svg class="ar" width="12" height="14" viewBox="0 0 12 14"><path d="M1.6 0.3 L11.3 6 Q12.3 7 11.3 8 L1.6 13.7 Q0 14.5 0 12.7 V1.3 Q0 -0.5 1.6 0.3Z" fill="#7b7b7b"/></svg></div>
<div style="position:absolute;left:301px;top:634px;width:30px;height:25px"><svg class="fd" width="30" height="25" viewBox="0 0 30 25"><path d="M0 2.2 Q0 0 2.2 0 H9.6 L12.2 3 H27.8 Q30 3 30 5.2 V22.2 Q30 24.4 27.8 24.4 H2.2 Q0 24.4 0 22.2 Z" fill="#76bdea"/><path d="M0.8 2.4 Q0.8 0.8 2.4 0.8 H9.3 L11.9 3.8 H27.6 Q29.2 3.8 29.2 5.4 V6 H0.8 Z" fill="#a7dcfa"/><rect x="0.8" y="6" width="28.4" height="17.4" fill="#8dcff6"/><rect x="0.8" y="21.2" width="28.4" height="1.2" fill="#a0d8f8"/></svg></div><div class="t" style="left:340px;top:629px;color:#161616;letter-spacing:0.52px">Compositions</div><div style="position:absolute;left:680px;top:639px;width:12px;height:14px"><svg class="ar" width="12" height="14" viewBox="0 0 12 14"><path d="M1.6 0.3 L11.3 6 Q12.3 7 11.3 8 L1.6 13.7 Q0 14.5 0 12.7 V1.3 Q0 -0.5 1.6 0.3Z" fill="#7b7b7b"/></svg></div>
<div style="position:absolute;left:301px;top:670px;width:30px;height:25px"><svg class="fd" width="30" height="25" viewBox="0 0 30 25"><path d="M0 2.2 Q0 0 2.2 0 H9.6 L12.2 3 H27.8 Q30 3 30 5.2 V22.2 Q30 24.4 27.8 24.4 H2.2 Q0 24.4 0 22.2 Z" fill="#76bdea"/><path d="M0.8 2.4 Q0.8 0.8 2.4 0.8 H9.3 L11.9 3.8 H27.6 Q29.2 3.8 29.2 5.4 V6 H0.8 Z" fill="#a7dcfa"/><rect x="0.8" y="6" width="28.4" height="17.4" fill="#8dcff6"/><rect x="0.8" y="21.2" width="28.4" height="1.2" fill="#a0d8f8"/></svg></div><div class="t" style="left:340px;top:665px;color:#161616;letter-spacing:0.36px">Containers</div><div style="position:absolute;left:680px;top:675px;width:12px;height:14px"><svg class="ar" width="12" height="14" viewBox="0 0 12 14"><path d="M1.6 0.3 L11.3 6 Q12.3 7 11.3 8 L1.6 13.7 Q0 14.5 0 12.7 V1.3 Q0 -0.5 1.6 0.3Z" fill="#7b7b7b"/></svg></div>
<div style="position:absolute;left:301px;top:706px;width:30px;height:25px"><svg class="fd" width="30" height="25" viewBox="0 0 30 25"><path d="M0 2.2 Q0 0 2.2 0 H9.6 L12.2 3 H27.8 Q30 3 30 5.2 V22.2 Q30 24.4 27.8 24.4 H2.2 Q0 24.4 0 22.2 Z" fill="#76bdea"/><path d="M0.8 2.4 Q0.8 0.8 2.4 0.8 H9.3 L11.9 3.8 H27.6 Q29.2 3.8 29.2 5.4 V6 H0.8 Z" fill="#a7dcfa"/><rect x="0.8" y="6" width="28.4" height="17.4" fill="#8dcff6"/><rect x="0.8" y="21.2" width="28.4" height="1.2" fill="#a0d8f8"/></svg></div><div class="t" style="left:340px;top:701px;color:#161616;letter-spacing:0.23px">Cookies</div><div style="position:absolute;left:680px;top:711px;width:12px;height:14px"><svg class="ar" width="12" height="14" viewBox="0 0 12 14"><path d="M1.6 0.3 L11.3 6 Q12.3 7 11.3 8 L1.6 13.7 Q0 14.5 0 12.7 V1.3 Q0 -0.5 1.6 0.3Z" fill="#7b7b7b"/></svg></div>
<div style="position:absolute;left:301px;top:742px;width:30px;height:25px"><svg class="fd" width="30" height="25" viewBox="0 0 30 25"><path d="M0 2.2 Q0 0 2.2 0 H9.6 L12.2 3 H27.8 Q30 3 30 5.2 V22.2 Q30 24.4 27.8 24.4 H2.2 Q0 24.4 0 22.2 Z" fill="#76bdea"/><path d="M0.8 2.4 Q0.8 0.8 2.4 0.8 H9.3 L11.9 3.8 H27.6 Q29.2 3.8 29.2 5.4 V6 H0.8 Z" fill="#a7dcfa"/><rect x="0.8" y="6" width="28.4" height="17.4" fill="#8dcff6"/><rect x="0.8" y="21.2" width="28.4" height="1.2" fill="#a0d8f8"/></svg></div><div class="t" style="left:340px;top:737px;color:#161616;letter-spacing:0.29px">CoreFollowUp</div><div style="position:absolute;left:680px;top:747px;width:12px;height:14px"><svg class="ar" width="12" height="14" viewBox="0 0 12 14"><path d="M1.6 0.3 L11.3 6 Q12.3 7 11.3 8 L1.6 13.7 Q0 14.5 0 12.7 V1.3 Q0 -0.5 1.6 0.3Z" fill="#7b7b7b"/></svg></div>
<div style="position:absolute;left:301px;top:778px;width:30px;height:25px"><svg class="fd" width="30" height="25" viewBox="0 0 30 25"><path d="M0 2.2 Q0 0 2.2 0 H9.6 L12.2 3 H27.8 Q30 3 30 5.2 V22.2 Q30 24.4 27.8 24.4 H2.2 Q0 24.4 0 22.2 Z" fill="#76bdea"/><path d="M0.8 2.4 Q0.8 0.8 2.4 0.8 H9.3 L11.9 3.8 H27.6 Q29.2 3.8 29.2 5.4 V6 H0.8 Z" fill="#a7dcfa"/><rect x="0.8" y="6" width="28.4" height="17.4" fill="#8dcff6"/><rect x="0.8" y="21.2" width="28.4" height="1.2" fill="#a0d8f8"/></svg></div><div class="t" style="left:340px;top:773px;color:#161616;letter-spacing:-1.1px">DES</div><div style="position:absolute;left:680px;top:783px;width:12px;height:14px"><svg class="ar" width="12" height="14" viewBox="0 0 12 14"><path d="M1.6 0.3 L11.3 6 Q12.3 7 11.3 8 L1.6 13.7 Q0 14.5 0 12.7 V1.3 Q0 -0.5 1.6 0.3Z" fill="#7b7b7b"/></svg></div>
<div style="position:absolute;left:301px;top:814px;width:30px;height:25px"><svg class="fd" width="30" height="25" viewBox="0 0 30 25"><path d="M0 2.2 Q0 0 2.2 0 H9.6 L12.2 3 H27.8 Q30 3 30 5.2 V22.2 Q30 24.4 27.8 24.4 H2.2 Q0 24.4 0 22.2 Z" fill="#76bdea"/><path d="M0.8 2.4 Q0.8 0.8 2.4 0.8 H9.3 L11.9 3.8 H27.6 Q29.2 3.8 29.2 5.4 V6 H0.8 Z" fill="#a7dcfa"/><rect x="0.8" y="6" width="28.4" height="17.4" fill="#8dcff6"/><rect x="0.8" y="21.2" width="28.4" height="1.2" fill="#a0d8f8"/></svg></div><div class="t" style="left:340px;top:809px;color:#161616;letter-spacing:0.66px">Dictionaries</div><div style="position:absolute;left:680px;top:819px;width:12px;height:14px"><svg class="ar" width="12" height="14" viewBox="0 0 12 14"><path d="M1.6 0.3 L11.3 6 Q12.3 7 11.3 8 L1.6 13.7 Q0 14.5 0 12.7 V1.3 Q0 -0.5 1.6 0.3Z" fill="#7b7b7b"/></svg></div>
<div style="position:absolute;left:301px;top:850px;width:30px;height:25px"><svg class="fd" width="30" height="25" viewBox="0 0 30 25"><path d="M0 2.2 Q0 0 2.2 0 H9.6 L12.2 3 H27.8 Q30 3 30 5.2 V22.2 Q30 24.4 27.8 24.4 H2.2 Q0 24.4 0 22.2 Z" fill="#76bdea"/><path d="M0.8 2.4 Q0.8 0.8 2.4 0.8 H9.3 L11.9 3.8 H27.6 Q29.2 3.8 29.2 5.4 V6 H0.8 Z" fill="#a7dcfa"/><rect x="0.8" y="6" width="28.4" height="17.4" fill="#8dcff6"/><rect x="0.8" y="21.2" width="28.4" height="1.2" fill="#a0d8f8"/></svg></div><div class="t" style="left:340px;top:845px;color:#161616;letter-spacing:-0.08px">Family</div><div style="position:absolute;left:680px;top:855px;width:12px;height:14px"><svg class="ar" width="12" height="14" viewBox="0 0 12 14"><path d="M1.6 0.3 L11.3 6 Q12.3 7 11.3 8 L1.6 13.7 Q0 14.5 0 12.7 V1.3 Q0 -0.5 1.6 0.3Z" fill="#7b7b7b"/></svg></div>
<div style="position:absolute;left:301px;top:886px;width:30px;height:25px"><svg class="fd" width="30" height="25" viewBox="0 0 30 25"><path d="M0 2.2 Q0 0 2.2 0 H9.6 L12.2 3 H27.8 Q30 3 30 5.2 V22.2 Q30 24.4 27.8 24.4 H2.2 Q0 24.4 0 22.2 Z" fill="#76bdea"/><path d="M0.8 2.4 Q0.8 0.8 2.4 0.8 H9.3 L11.9 3.8 H27.6 Q29.2 3.8 29.2 5.4 V6 H0.8 Z" fill="#a7dcfa"/><rect x="0.8" y="6" width="28.4" height="17.4" fill="#8dcff6"/><rect x="0.8" y="21.2" width="28.4" height="1.2" fill="#a0d8f8"/></svg></div><div class="t" style="left:340px;top:881px;color:#161616;letter-spacing:0.12px">Favoris</div><div style="position:absolute;left:680px;top:891px;width:12px;height:14px"><svg class="ar" width="12" height="14" viewBox="0 0 12 14"><path d="M1.6 0.3 L11.3 6 Q12.3 7 11.3 8 L1.6 13.7 Q0 14.5 0 12.7 V1.3 Q0 -0.5 1.6 0.3Z" fill="#7b7b7b"/></svg></div>
<div style="position:absolute;left:301px;top:922px;width:30px;height:25px"><svg class="fd" width="30" height="25" viewBox="0 0 30 25"><path d="M0 2.2 Q0 0 2.2 0 H9.6 L12.2 3 H27.8 Q30 3 30 5.2 V22.2 Q30 24.4 27.8 24.4 H2.2 Q0 24.4 0 22.2 Z" fill="#76bdea"/><path d="M0.8 2.4 Q0.8 0.8 2.4 0.8 H9.3 L11.9 3.8 H27.6 Q29.2 3.8 29.2 5.4 V6 H0.8 Z" fill="#a7dcfa"/><rect x="0.8" y="6" width="28.4" height="17.4" fill="#8dcff6"/><rect x="0.8" y="21.2" width="28.4" height="1.2" fill="#a0d8f8"/></svg></div><div class="t" style="left:340px;top:917px;color:#161616;letter-spacing:0.35px">FileProvider</div><div style="position:absolute;left:680px;top:927px;width:12px;height:14px"><svg class="ar" width="12" height="14" viewBox="0 0 12 14"><path d="M1.6 0.3 L11.3 6 Q12.3 7 11.3 8 L1.6 13.7 Q0 14.5 0 12.7 V1.3 Q0 -0.5 1.6 0.3Z" fill="#7b7b7b"/></svg></div>
<div style="position:absolute;left:301px;top:958px;width:30px;height:25px"><svg class="fd" width="30" height="25" viewBox="0 0 30 25"><path d="M0 2.2 Q0 0 2.2 0 H9.6 L12.2 3 H27.8 Q30 3 30 5.2 V22.2 Q30 24.4 27.8 24.4 H2.2 Q0 24.4 0 22.2 Z" fill="#76bdea"/><path d="M0.8 2.4 Q0.8 0.8 2.4 0.8 H9.3 L11.9 3.8 H27.6 Q29.2 3.8 29.2 5.4 V6 H0.8 Z" fill="#a7dcfa"/><rect x="0.8" y="6" width="28.4" height="17.4" fill="#8dcff6"/><rect x="0.8" y="21.2" width="28.4" height="1.2" fill="#a0d8f8"/></svg></div><div class="t" style="left:340px;top:953px;color:#161616;letter-spacing:0.62px">FontCollections</div><div style="position:absolute;left:680px;top:963px;width:12px;height:14px"><svg class="ar" width="12" height="14" viewBox="0 0 12 14"><path d="M1.6 0.3 L11.3 6 Q12.3 7 11.3 8 L1.6 13.7 Q0 14.5 0 12.7 V1.3 Q0 -0.5 1.6 0.3Z" fill="#7b7b7b"/></svg></div>
<div style="position:absolute;left:301px;top:994px;width:30px;height:25px"><svg class="fd" width="30" height="25" viewBox="0 0 30 25"><path d="M0 2.2 Q0 0 2.2 0 H9.6 L12.2 3 H27.8 Q30 3 30 5.2 V22.2 Q30 24.4 27.8 24.4 H2.2 Q0 24.4 0 22.2 Z" fill="#76bdea"/><path d="M0.8 2.4 Q0.8 0.8 2.4 0.8 H9.3 L11.9 3.8 H27.6 Q29.2 3.8 29.2 5.4 V6 H0.8 Z" fill="#a7dcfa"/><rect x="0.8" y="6" width="28.4" height="17.4" fill="#8dcff6"/><rect x="0.8" y="21.2" width="28.4" height="1.2" fill="#a0d8f8"/></svg></div><div class="t" style="left:340px;top:989px;color:#161616;letter-spacing:0.65px">Fonts</div><div style="position:absolute;left:680px;top:999px;width:12px;height:14px"><svg class="ar" width="12" height="14" viewBox="0 0 12 14"><path d="M1.6 0.3 L11.3 6 Q12.3 7 11.3 8 L1.6 13.7 Q0 14.5 0 12.7 V1.3 Q0 -0.5 1.6 0.3Z" fill="#7b7b7b"/></svg></div>
<div style="position:absolute;left:301px;top:1030px;width:30px;height:25px"><svg class="fd" width="30" height="25" viewBox="0 0 30 25"><path d="M0 2.2 Q0 0 2.2 0 H9.6 L12.2 3 H27.8 Q30 3 30 5.2 V22.2 Q30 24.4 27.8 24.4 H2.2 Q0 24.4 0 22.2 Z" fill="#76bdea"/><path d="M0.8 2.4 Q0.8 0.8 2.4 0.8 H9.3 L11.9 3.8 H27.6 Q29.2 3.8 29.2 5.4 V6 H0.8 Z" fill="#a7dcfa"/><rect x="0.8" y="6" width="28.4" height="17.4" fill="#8dcff6"/><rect x="0.8" y="21.2" width="28.4" height="1.2" fill="#a0d8f8"/></svg></div><div class="t" style="left:340px;top:1025px;color:#161616;letter-spacing:0.52px">FrontBoard</div><div style="position:absolute;left:680px;top:1035px;width:12px;height:14px"><svg class="ar" width="12" height="14" viewBox="0 0 12 14"><path d="M1.6 0.3 L11.3 6 Q12.3 7 11.3 8 L1.6 13.7 Q0 14.5 0 12.7 V1.3 Q0 -0.5 1.6 0.3Z" fill="#7b7b7b"/></svg></div>
<div style="position:absolute;left:301px;top:1066px;width:30px;height:25px"><svg class="fd" width="30" height="25" viewBox="0 0 30 25"><path d="M0 2.2 Q0 0 2.2 0 H9.6 L12.2 3 H27.8 Q30 3 30 5.2 V22.2 Q30 24.4 27.8 24.4 H2.2 Q0 24.4 0 22.2 Z" fill="#76bdea"/><path d="M0.8 2.4 Q0.8 0.8 2.4 0.8 H9.3 L11.9 3.8 H27.6 Q29.2 3.8 29.2 5.4 V6 H0.8 Z" fill="#a7dcfa"/><rect x="0.8" y="6" width="28.4" height="17.4" fill="#8dcff6"/><rect x="0.8" y="21.2" width="28.4" height="1.2" fill="#a0d8f8"/></svg></div><div class="t" style="left:340px;top:1061px;color:#161616;letter-spacing:0.0px">GameKit</div><div style="position:absolute;left:680px;top:1071px;width:12px;height:14px"><svg class="ar" width="12" height="14" viewBox="0 0 12 14"><path d="M1.6 0.3 L11.3 6 Q12.3 7 11.3 8 L1.6 13.7 Q0 14.5 0 12.7 V1.3 Q0 -0.5 1.6 0.3Z" fill="#7b7b7b"/></svg></div>
<div style="position:absolute;left:301px;top:1102px;width:30px;height:25px"><svg class="fd" width="30" height="25" viewBox="0 0 30 25"><path d="M0 2.2 Q0 0 2.2 0 H9.6 L12.2 3 H27.8 Q30 3 30 5.2 V22.2 Q30 24.4 27.8 24.4 H2.2 Q0 24.4 0 22.2 Z" fill="#76bdea"/><path d="M0.8 2.4 Q0.8 0.8 2.4 0.8 H9.3 L11.9 3.8 H27.6 Q29.2 3.8 29.2 5.4 V6 H0.8 Z" fill="#a7dcfa"/><rect x="0.8" y="6" width="28.4" height="17.4" fill="#8dcff6"/><rect x="0.8" y="21.2" width="28.4" height="1.2" fill="#a0d8f8"/></svg></div><div class="t" style="left:340px;top:1097px;color:#161616;letter-spacing:0.28px">Google</div><div style="position:absolute;left:680px;top:1107px;width:12px;height:14px"><svg class="ar" width="12" height="14" viewBox="0 0 12 14"><path d="M1.6 0.3 L11.3 6 Q12.3 7 11.3 8 L1.6 13.7 Q0 14.5 0 12.7 V1.3 Q0 -0.5 1.6 0.3Z" fill="#7b7b7b"/></svg></div>
<div style="position:absolute;left:301px;top:1138px;width:30px;height:25px"><svg class="fd" width="30" height="25" viewBox="0 0 30 25"><path d="M0 2.2 Q0 0 2.2 0 H9.6 L12.2 3 H27.8 Q30 3 30 5.2 V22.2 Q30 24.4 27.8 24.4 H2.2 Q0 24.4 0 22.2 Z" fill="#76bdea"/><path d="M0.8 2.4 Q0.8 0.8 2.4 0.8 H9.3 L11.9 3.8 H27.6 Q29.2 3.8 29.2 5.4 V6 H0.8 Z" fill="#a7dcfa"/><rect x="0.8" y="6" width="28.4" height="17.4" fill="#8dcff6"/><rect x="0.8" y="21.2" width="28.4" height="1.2" fill="#a0d8f8"/></svg></div><div class="t" style="left:340px;top:1133px;color:#161616;letter-spacing:0.29px">Group Containers</div><div style="position:absolute;left:680px;top:1143px;width:12px;height:14px"><svg class="ar" width="12" height="14" viewBox="0 0 12 14"><path d="M1.6 0.3 L11.3 6 Q12.3 7 11.3 8 L1.6 13.7 Q0 14.5 0 12.7 V1.3 Q0 -0.5 1.6 0.3Z" fill="#7b7b7b"/></svg></div>
<div style="position:absolute;left:301px;top:1174px;width:30px;height:25px"><svg class="fd" width="30" height="25" viewBox="0 0 30 25"><path d="M0 2.2 Q0 0 2.2 0 H9.6 L12.2 3 H27.8 Q30 3 30 5.2 V22.2 Q30 24.4 27.8 24.4 H2.2 Q0 24.4 0 22.2 Z" fill="#76bdea"/><path d="M0.8 2.4 Q0.8 0.8 2.4 0.8 H9.3 L11.9 3.8 H27.6 Q29.2 3.8 29.2 5.4 V6 H0.8 Z" fill="#a7dcfa"/><rect x="0.8" y="6" width="28.4" height="17.4" fill="#8dcff6"/><rect x="0.8" y="21.2" width="28.4" height="1.2" fill="#a0d8f8"/></svg></div><div class="t" style="left:340px;top:1169px;color:#161616;letter-spacing:0.52px">HomeKit</div><div style="position:absolute;left:680px;top:1179px;width:12px;height:14px"><svg class="ar" width="12" height="14" viewBox="0 0 12 14"><path d="M1.6 0.3 L11.3 6 Q12.3 7 11.3 8 L1.6 13.7 Q0 14.5 0 12.7 V1.3 Q0 -0.5 1.6 0.3Z" fill="#7b7b7b"/></svg></div>
<div style="position:absolute;left:301px;top:1210px;width:30px;height:25px"><svg class="fd" width="30" height="25" viewBox="0 0 30 25"><path d="M0 2.2 Q0 0 2.2 0 H9.6 L12.2 3 H27.8 Q30 3 30 5.2 V22.2 Q30 24.4 27.8 24.4 H2.2 Q0 24.4 0 22.2 Z" fill="#76bdea"/><path d="M0.8 2.4 Q0.8 0.8 2.4 0.8 H9.3 L11.9 3.8 H27.6 Q29.2 3.8 29.2 5.4 V6 H0.8 Z" fill="#a7dcfa"/><rect x="0.8" y="6" width="28.4" height="17.4" fill="#8dcff6"/><rect x="0.8" y="21.2" width="28.4" height="1.2" fill="#a0d8f8"/></svg></div><div class="t" style="left:340px;top:1205px;color:#161616;letter-spacing:0.63px">IdentityServices</div><div style="position:absolute;left:680px;top:1215px;width:12px;height:14px"><svg class="ar" width="12" height="14" viewBox="0 0 12 14"><path d="M1.6 0.3 L11.3 6 Q12.3 7 11.3 8 L1.6 13.7 Q0 14.5 0 12.7 V1.3 Q0 -0.5 1.6 0.3Z" fill="#7b7b7b"/></svg></div>
<div style="position:absolute;left:287px;top:1242px;width:409px;height:34px;background:#dcdcdc"></div><div style="position:absolute;left:301px;top:1246px;width:30px;height:25px"><svg class="fd" width="30" height="25" viewBox="0 0 30 25"><path d="M0 2.2 Q0 0 2.2 0 H9.6 L12.2 3 H27.8 Q30 3 30 5.2 V22.2 Q30 24.4 27.8 24.4 H2.2 Q0 24.4 0 22.2 Z" fill="#76bdea"/><path d="M0.8 2.4 Q0.8 0.8 2.4 0.8 H9.3 L11.9 3.8 H27.6 Q29.2 3.8 29.2 5.4 V6 H0.8 Z" fill="#a7dcfa"/><rect x="0.8" y="6" width="28.4" height="17.4" fill="#8dcff6"/><rect x="0.8" y="21.2" width="28.4" height="1.2" fill="#a0d8f8"/></svg></div><div class="t" style="left:340px;top:1241px;color:#161616;letter-spacing:0.7px">iMovie</div><div style="position:absolute;left:680px;top:1251px;width:12px;height:14px"><svg class="ar" width="12" height="14" viewBox="0 0 12 14"><path d="M1.6 0.3 L11.3 6 Q12.3 7 11.3 8 L1.6 13.7 Q0 14.5 0 12.7 V1.3 Q0 -0.5 1.6 0.3Z" fill="#7b7b7b"/></svg></div>
<div style="position:absolute;left:301px;top:1282px;width:30px;height:25px"><svg class="fd" width="30" height="25" viewBox="0 0 30 25"><path d="M0 2.2 Q0 0 2.2 0 H9.6 L12.2 3 H27.8 Q30 3 30 5.2 V22.2 Q30 24.4 27.8 24.4 H2.2 Q0 24.4 0 22.2 Z" fill="#76bdea"/><path d="M0.8 2.4 Q0.8 0.8 2.4 0.8 H9.3 L11.9 3.8 H27.6 Q29.2 3.8 29.2 5.4 V6 H0.8 Z" fill="#a7dcfa"/><rect x="0.8" y="6" width="28.4" height="17.4" fill="#8dcff6"/><rect x="0.8" y="21.2" width="28.4" height="1.2" fill="#a0d8f8"/></svg></div><div class="t" style="left:340px;top:1277px;color:#161616;letter-spacing:0.79px">Input Methods</div><div style="position:absolute;left:680px;top:1287px;width:12px;height:14px"><svg class="ar" width="12" height="14" viewBox="0 0 12 14"><path d="M1.6 0.3 L11.3 6 Q12.3 7 11.3 8 L1.6 13.7 Q0 14.5 0 12.7 V1.3 Q0 -0.5 1.6 0.3Z" fill="#7b7b7b"/></svg></div>
<div style="position:absolute;left:301px;top:1318px;width:30px;height:25px"><svg class="fd" width="30" height="25" viewBox="0 0 30 25"><path d="M0 2.2 Q0 0 2.2 0 H9.6 L12.2 3 H27.8 Q30 3 30 5.2 V22.2 Q30 24.4 27.8 24.4 H2.2 Q0 24.4 0 22.2 Z" fill="#76bdea"/><path d="M0.8 2.4 Q0.8 0.8 2.4 0.8 H9.3 L11.9 3.8 H27.6 Q29.2 3.8 29.2 5.4 V6 H0.8 Z" fill="#a7dcfa"/><rect x="0.8" y="6" width="28.4" height="17.4" fill="#8dcff6"/><rect x="0.8" y="21.2" width="28.4" height="1.2" fill="#a0d8f8"/></svg></div><div class="t" style="left:340px;top:1313px;color:#161616;letter-spacing:0.62px">Internet Plug-Ins</div><div style="position:absolute;left:680px;top:1323px;width:12px;height:14px"><svg class="ar" width="12" height="14" viewBox="0 0 12 14"><path d="M1.6 0.3 L11.3 6 Q12.3 7 11.3 8 L1.6 13.7 Q0 14.5 0 12.7 V1.3 Q0 -0.5 1.6 0.3Z" fill="#7b7b7b"/></svg></div>
<div style="position:absolute;left:711px;top:130px;width:30px;height:25px"><svg class="fd" width="30" height="25" viewBox="0 0 30 25"><path d="M0 2.2 Q0 0 2.2 0 H9.6 L12.2 3 H27.8 Q30 3 30 5.2 V22.2 Q30 24.4 27.8 24.4 H2.2 Q0 24.4 0 22.2 Z" fill="#76bdea"/><path d="M0.8 2.4 Q0.8 0.8 2.4 0.8 H9.3 L11.9 3.8 H27.6 Q29.2 3.8 29.2 5.4 V6 H0.8 Z" fill="#a7dcfa"/><rect x="0.8" y="6" width="28.4" height="17.4" fill="#8dcff6"/><rect x="0.8" y="21.2" width="28.4" height="1.2" fill="#a0d8f8"/></svg></div><div class="t" style="left:750px;top:125px;color:#161616;letter-spacing:0.87px">Plug-ins</div><div style="position:absolute;left:1090px;top:135px;width:12px;height:14px"><svg class="ar" width="12" height="14" viewBox="0 0 12 14"><path d="M1.6 0.3 L11.3 6 Q12.3 7 11.3 8 L1.6 13.7 Q0 14.5 0 12.7 V1.3 Q0 -0.5 1.6 0.3Z" fill="#7b7b7b"/></svg></div>
<div style="position:absolute;left:697px;top:162px;width:409px;height:34px;background:#2c62d9"></div><div style="position:absolute;left:711px;top:166px;width:30px;height:25px"><svg class="fd" width="30" height="25" viewBox="0 0 30 25"><path d="M0 2.2 Q0 0 2.2 0 H9.6 L12.2 3 H27.8 Q30 3 30 5.2 V22.2 Q30 24.4 27.8 24.4 H2.2 Q0 24.4 0 22.2 Z" fill="#76bdea"/><path d="M0.8 2.4 Q0.8 0.8 2.4 0.8 H9.3 L11.9 3.8 H27.6 Q29.2 3.8 29.2 5.4 V6 H0.8 Z" fill="#a7dcfa"/><rect x="0.8" y="6" width="28.4" height="17.4" fill="#8dcff6"/><rect x="0.8" y="21.2" width="28.4" height="1.2" fill="#a0d8f8"/></svg></div><div class="t" style="left:750px;top:161px;color:#ffffff;letter-spacing:0.58px">Sound Effects</div><div style="position:absolute;left:1090px;top:171px;width:12px;height:14px"><svg class="ar" width="12" height="14" viewBox="0 0 12 14"><path d="M1.6 0.3 L11.3 6 Q12.3 7 11.3 8 L1.6 13.7 Q0 14.5 0 12.7 V1.3 Q0 -0.5 1.6 0.3Z" fill="#ffffff"/></svg></div>
<div style="position:absolute;left:1120px;top:128px;width:32px;height:32px"><svg width="32" height="32" viewBox="0 0 32 32"><rect x="1" y="1" width="29" height="28" fill="#f0f0f0" stroke="#d6d6d6" stroke-width="1"/><rect x="1" y="28.2" width="29" height="1.4" fill="#a5a5a5"/><g fill="#cacaca"><path d="M11.5 9.5L19.5 8V19.5H18.5V11L12.5 12.2V21H11.5Z"/><ellipse cx="10" cy="21" rx="2.2" ry="1.6"/><ellipse cx="17" cy="19.5" rx="2.2" ry="1.6"/></g></svg></div>
<div class="t" style="left:1160px;top:125px;color:#161616;letter-spacing:0.32px">Ocean Waves copie.mp3</div>
<div style="position:absolute;left:1120px;top:164px;width:32px;height:32px"><svg width="32" height="32" viewBox="0 0 32 32"><rect x="1" y="1" width="29" height="28" fill="#f0f0f0" stroke="#d6d6d6" stroke-width="1"/><rect x="1" y="28.2" width="29" height="1.4" fill="#a5a5a5"/><g fill="#cacaca"><path d="M11.5 9.5L19.5 8V19.5H18.5V11L12.5 12.2V21H11.5Z"/><ellipse cx="10" cy="21" rx="2.2" ry="1.6"/><ellipse cx="17" cy="19.5" rx="2.2" ry="1.6"/></g></svg></div>
<div class="t" style="left:1160px;top:161px;color:#161616;letter-spacing:0.76px">Thuderstorm.mp3</div>
<div style="position:absolute;left:0;top:1342px;width:1508px;height:4px;background:linear-gradient(90deg,#1f2c3d 0%,#24344a 35%,#1c2736 70%,#10151c 100%);border-top:1px solid #0d131b"></div>
</body></html>
